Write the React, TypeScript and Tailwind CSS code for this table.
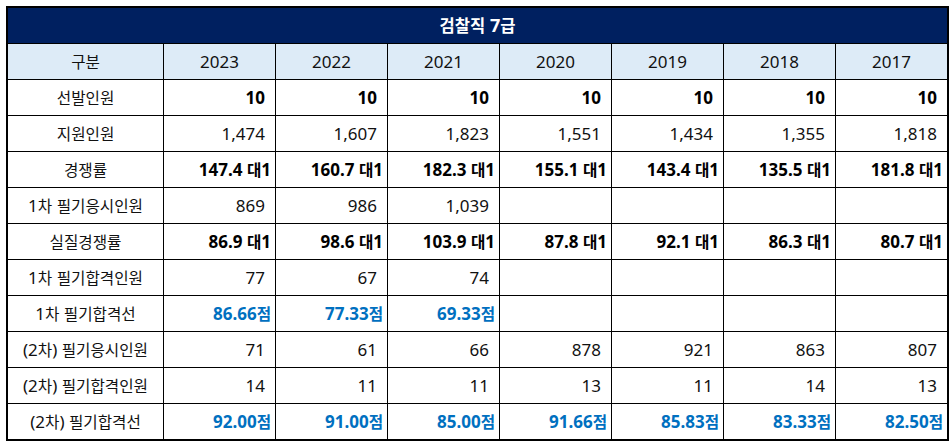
type Kind = "plain" | "bold" | "score";

type Row = {
  label: string;
  kind: Kind;
  values: string[];
};

const years = ["2023", "2022", "2021", "2020", "2019", "2018", "2017"];

const rows: Row[] = [
  { label: "선발인원", kind: "bold", values: ["10", "10", "10", "10", "10", "10", "10"] },
  { label: "지원인원", kind: "plain", values: ["1,474", "1,607", "1,823", "1,551", "1,434", "1,355", "1,818"] },
  {
    label: "경쟁률",
    kind: "bold",
    values: ["147.4 대1", "160.7 대1", "182.3 대1", "155.1 대1", "143.4 대1", "135.5 대1", "181.8 대1"],
  },
  { label: "1차 필기응시인원", kind: "plain", values: ["869", "986", "1,039", "", "", "", ""] },
  {
    label: "실질경쟁률",
    kind: "bold",
    values: ["86.9 대1", "98.6 대1", "103.9 대1", "87.8 대1", "92.1 대1", "86.3 대1", "80.7 대1"],
  },
  { label: "1차 필기합격인원", kind: "plain", values: ["77", "67", "74", "", "", "", ""] },
  { label: "1차 필기합격선", kind: "score", values: ["86.66점", "77.33점", "69.33점", "", "", "", ""] },
  { label: "(2차) 필기응시인원", kind: "plain", values: ["71", "61", "66", "878", "921", "863", "807"] },
  { label: "(2차) 필기합격인원", kind: "plain", values: ["14", "11", "11", "13", "11", "14", "13"] },
  {
    label: "(2차) 필기합격선",
    kind: "score",
    values: ["92.00점", "91.00점", "85.00점", "91.66점", "85.83점", "83.33점", "82.50점"],
  },
];

// Hangul runs are set a little smaller so they sit like Malgun Gothic next to the digits
function Txt({ text }: { text: string }) {
  const parts = text.split(/([\uAC00-\uD7A3]+)/);
  return (
    <span className="whitespace-pre">
      {parts.map((p, i) =>
        /[\uAC00-\uD7A3]/.test(p) ? (
          <span key={i} className="text-[0.92em]">
            {p}
          </span>
        ) : (
          p
        )
      )}
    </span>
  );
}

function ValueCell({ value, kind }: { value: string; kind: Kind }) {
  const hasSuffix = /[\uAC00-\uD7A3]/.test(value);
  return (
    <div
      className={`flex items-center justify-end border-l border-black ${hasSuffix ? "pr-[4px]" : "pr-[10px]"} ${
        kind === "plain" ? "font-normal text-[#111]" : kind === "bold" ? "font-bold text-black" : "font-bold text-[#0070c0]"
      }`}
    >
      <Txt text={value} />
    </div>
  );
}

export default function App() {
  return (
    <div className="min-h-screen bg-white pl-[6px] pt-[6px]">
      <div
        className="w-[943px] border-2 border-black text-[17px] leading-none text-[#111]"
        style={{ fontFamily: '"Noto Sans", "Noto Sans CJK KR", sans-serif' }}
      >
        <div className="flex h-[35px] items-center justify-center bg-[#002060] text-[18px] font-bold text-white">
          <Txt text="검찰직 7급" />
        </div>

        <div className="grid h-[36px] grid-cols-[155px_repeat(7,112px)] border-t border-black bg-[#ddebf7]">
          <div className="flex items-center justify-center">
            <Txt text="구분" />
          </div>
          {years.map((y) => (
            <div key={y} className="flex items-center justify-center border-l border-black">
              {y}
            </div>
          ))}
        </div>

        {rows.map((r) => (
          <div key={r.label} className="grid h-[36px] grid-cols-[155px_repeat(7,112px)] border-t border-black">
            <div className="flex items-center justify-center">
              <Txt text={r.label} />
            </div>
            {r.values.map((v, i) => (
              <ValueCell key={i} value={v} kind={r.kind} />
            ))}
          </div>
        ))}
      </div>
    </div>
  );
}
